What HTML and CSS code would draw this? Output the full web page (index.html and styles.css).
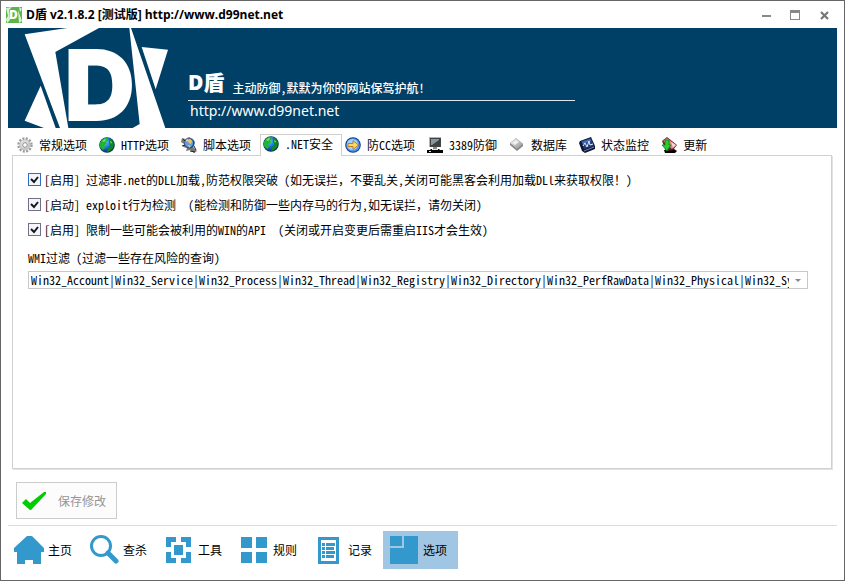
FILE: index.html
```html
<!DOCTYPE html>
<html lang="zh-CN">
<head>
  <meta charset="UTF-8" />
  <meta name="viewport" content="width=device-width, initial-scale=1.0"/>
  <title>D盾</title>
  <link rel="stylesheet" href="styles.css">
</head>
<body>
  <header class="titlebar">
    <svg class="app-icon" viewBox="0 0 16 16">
      <rect width="16" height="16" fill="#5cb54a"/>
      <path d="M0 1L6 0L3 3L4 13L1 16L0 12L2 9zM13 0L16 2L14 5zM12 3L16 14L13 16z" fill="#d9f2d2"/>
      <text class="mark" x="3" y="12" font-size="12" fill="#fff">D</text>
    </svg>
    <h1>D盾 v2.1.8.2 [测试版] http://www.d99net.net</h1>
    <div class="window-buttons">
      <button type="button" aria-label="最小化"><svg viewBox="0 0 11 11"><path d="M1 5h9v2H1z"/></svg></button>
      <button type="button" aria-label="最大化"><svg viewBox="0 0 11 11"><path d="M0 0h10v10H0zM1 3v6h8V3z" fill-rule="evenodd"/></svg></button>
      <button type="button" aria-label="关闭"><svg viewBox="0 0 11 11"><path d="M2 2l7 7M9 2l-7 7" stroke="#777" stroke-width="2.2"/></svg></button>
    </div>
  </header>

  <div class="banner">
    <svg class="banner-logo" viewBox="12 12 522 300">
      <g fill="#fff">
        <path d="M62 31L190 12H285L154 84L193 312H168z"/>
        <path d="M110 185L155 312H120L62 290z"/>
        <path d="M376 12H381L484 312H386L407 300z"/>
        <path d="M413 69L492 77L455 196z"/>
        <text class="logo-mark" x="180" y="291" font-size="296">D</text>
      </g>
    </svg>
    <div class="banner-text">
      <p class="slogan"><strong>D盾</strong> <span>主动防御,默默为你的网站保驾护航!</span></p>
      <p class="site">http://www.d99net.net</p>
    </div>
  </div>

  <!-- Gradients and the globe shared by the tab icons -->
  <svg class="defs" aria-hidden="true">
    <defs>
      <radialGradient id="sea" cx="35%" cy="30%" r="75%">
        <stop offset="0" stop-color="#7fd0ff"/>
        <stop offset="0.5" stop-color="#1a78d8"/>
        <stop offset="1" stop-color="#062a70"/>
      </radialGradient>
      <linearGradient id="silver" x1="0" y1="0" x2="1" y2="1">
        <stop offset="0" stop-color="#f4f4f4"/>
        <stop offset="1" stop-color="#8e8e8e"/>
      </linearGradient>
      <symbol id="globe" viewBox="0 0 16 16">
        <circle cx="8" cy="8" r="7.8" fill="#0a3a50"/>
        <circle cx="8" cy="8" r="7.2" fill="url(#sea)"/>
        <path d="M1 6L4 2L8 1L9 3L7 5L8 7L5 8L6 11L4 13L1 10z" fill="#1fb52c"/>
        <path d="M10 2L13 3L15 7L14 11L11 14L8 15L9 11L12 9L10 6z" fill="#0c8a1c"/>
        <path d="M3 4L6 2L7 3L5 5zM11 4L13 5L12 7z" fill="#7be86a"/>
      </symbol>
    </defs>
  </svg>

  <div class="tabs" role="tablist">
    <button class="tab" type="button" role="tab">
      <svg viewBox="0 0 16 16">
        <circle cx="8" cy="8" r="6.4" fill="none" stroke="#9b9b9b" stroke-width="2.6" stroke-dasharray="2 1.35"/>
        <circle cx="8" cy="8" r="5.6" fill="#c4c4c4"/>
        <circle cx="7.5" cy="7.3" r="4" fill="#dedede"/>
        <circle cx="8" cy="8" r="2.3" fill="#fff" stroke="#8f8f8f"/>
      </svg>常规选项
    </button>
    <button class="tab" type="button" role="tab">
      <svg viewBox="0 0 16 16"><use href="#globe"/></svg>HTTP选项
    </button>
    <button class="tab" type="button" role="tab">
      <svg viewBox="0 0 16 16">
        <path d="M1 1L4 2L8 0L12 2L14 5L12 10L16 14L13 16L9 13L5 14L6 11L2 10L3 7L0 5z" fill="#777"/>
        <path d="M2 2L4 4M1 9L4 8M13 9L15 13M9 14L14 15" stroke="#222"/>
        <circle cx="8.5" cy="6.5" r="5" fill="#174a94"/>
        <circle cx="8" cy="6" r="4" fill="#5f9fe0"/>
        <path d="M6 3L9 2L11 4L10 7L8 6zM7 8L10 9L8 11z" fill="#f2c368"/>
        <path d="M5 3L7 2L6 5z" fill="#d8edff"/>
      </svg>脚本选项
    </button>
    <button class="tab active" type="button" role="tab" aria-selected="true">
      <svg viewBox="0 0 16 16"><use href="#globe"/></svg>.NET安全
    </button>
    <button class="tab" type="button" role="tab">
      <svg viewBox="0 0 16 16">
        <circle cx="8" cy="8" r="7.8" fill="#123c8c"/>
        <circle cx="8" cy="8" r="6.8" fill="#4b94e8"/>
        <circle cx="7.5" cy="7.5" r="5.6" fill="#a5d2fa"/>
        <path d="M3 6.5H8V3.5L13.5 8L8 12.5V9.5H3z" fill="#ffd768" stroke="#b9731a" stroke-width="0.9"/>
      </svg>防CC选项
    </button>
    <button class="tab" type="button" role="tab">
      <svg viewBox="0 0 16 16">
        <path d="M2 0H14V10H2z" fill="#b4b4b4"/>
        <path d="M3 1H13V9H3z" fill="#3a4348"/>
        <path d="M4 2H12V3L5 8H4z" fill="#8b979c"/>
        <path d="M13 1h1v9H3V9h10z" fill="#444"/>
        <path d="M6 10H10V12H6z" fill="#888"/>
        <path d="M0 13H3L4 12H12L13 13H16V16H0z" fill="#050505"/>
        <path d="M5 12H11V13H5zM2 14H4V15H2z" fill="#ddd"/>
      </svg>3389防御
    </button>
    <button class="tab" type="button" role="tab">
      <svg viewBox="0 0 16 16">
        <path d="M1 6L7 1L14 7L14 9L8 14L1 8z" fill="#858585"/>
        <path d="M1 6L7 1L14 7L8 12z" fill="url(#silver)"/>
        <path d="M3 6L7 3L10 5L6 8z" fill="#fff" opacity="0.7"/>
      </svg>数据库
    </button>
    <button class="tab" type="button" role="tab">
      <svg viewBox="0 0 16 16">
        <path d="M1 4L12 0L16 9L16 12L6 16L3 14L0 6z" fill="#0d1733"/>
        <path d="M2 4L12 1L15 9L5 12z" fill="#24407c"/>
        <path d="M3 5L11 2L12 4L4 7z" fill="#4c70b4"/>
        <path d="M4 9L6 6L8 10L10 4L11 8L14 7" fill="none" stroke="#dce9ff"/>
        <path d="M5 14L15 10" stroke="#7387b0"/>
      </svg>状态监控
    </button>
    <button class="tab" type="button" role="tab">
      <svg viewBox="0 0 16 16">
        <path d="M3 13L13 12L16 14L14 16H4z" fill="#050505"/>
        <path d="M1 4L6 0L16 8L12 13L5 14z" fill="#66232a"/>
        <path d="M2 4L6 1L15 8L11 12z" fill="#e77b80"/>
        <path d="M10 5L15 8L12 11z" fill="#f6d5d2"/>
        <path d="M4 3H8V8H10L6 14L1 8H4z" fill="#1fd32b" stroke="#0a7415" stroke-width="0.7"/>
      </svg>更新
    </button>
  </div>

  <main class="panel">
    <label class="check">
      <input type="checkbox" class="focused" checked>
      <span>[启用] 过滤非.net的DLL加载,防范权限突破 (如无误拦<span class="full">，</span>不要乱关,关闭可能黑客会利用加载DLl来获取权限！)</span>
    </label>
    <label class="check">
      <input type="checkbox" checked>
      <span>[启动] exploit行为检测&nbsp; (能检测和防御一些内存马的行为,如无误拦<span class="full">，</span>请勿关闭)</span>
    </label>
    <label class="check">
      <input type="checkbox" checked>
      <span>[启用] 限制一些可能会被利用的WIN的API&nbsp; (关闭或开启变更后需重启IIS才会生效)</span>
    </label>
    <label class="field-label" for="wmi">WMI过滤 (过滤一些存在风险的查询)</label>
    <select class="combo" id="wmi">
      <option>Win32_Account|Win32_Service|Win32_Process|Win32_Thread|Win32_Registry|Win32_Directory|Win32_PerfRawData|Win32_Physical|Win32_System</option>
    </select>
  </main>

  <button class="save" type="button" disabled>
    <svg viewBox="0 0 24 18"><path d="M0 11L4 7L8 11L22 0H24V2L9 18H8z" fill="#0c0"/></svg>保存修改
  </button>

  <nav class="bottom-nav">
    <button type="button">
      <svg viewBox="0 0 30 30"><path d="M13 1h5l5 5l7 7v4h-3v12h-8v-4h-8v4H3V17H0v-4z"/></svg>主页
    </button>
    <button type="button">
      <svg viewBox="0 0 30 30">
        <circle cx="12" cy="11" r="9.5" fill="none" stroke="#39c" stroke-width="3"/>
        <path d="M19 18l8 8" stroke="#39c" stroke-width="5" stroke-linecap="round"/>
      </svg>查杀
    </button>
    <button type="button">
      <svg viewBox="0 0 30 30"><path d="M2 2h10v5H7v5H2zM17 2h10v10h-5V7h-5zM2 17h5v6h5v5H2zM22 17h5v11H17v-5h5zM10 10h9v10h-9z"/></svg>工具
    </button>
    <button type="button">
      <svg viewBox="0 0 30 30"><path d="M2 2h11v11H2zM17 2h11v11H17zM2 17h11v11H2zM17 17h11v11H17z"/></svg>规则
    </button>
    <button type="button">
      <svg viewBox="0 0 30 30">
        <path d="M4 2h21v27H4zM7 5v21h15V5z" fill-rule="evenodd"/>
        <path d="M8 8h3v3H8zM12 8h9v3h-9zM8 12h3v3H8zM12 12h8v3h-8zM8 16h3v3H8zM12 16h9v3h-9zM8 20h3v3H8zM12 20h8v3h-8z"/>
      </svg>记录
    </button>
    <button type="button" class="active">
      <svg viewBox="0 0 30 30"><path d="M1 1h12v10H1zM15 1h14v28H1V13h14z"/></svg>选项
    </button>
  </nav>
</body>
</html>
```
FILE: styles.css
```css
* {
  box-sizing: border-box;
}

body {
  display: flex;
  flex-direction: column;
  min-height: 100vh;
  margin: 0;
  border: 1px solid #666;
  background-color: #fff;
  color: #000;
  font-family: "Noto Sans CJK SC", sans-serif;
  font-size: 12px;
  line-height: 16px;
  font-feature-settings: "hwid";
}

button, select {
  font: inherit;
  font-feature-settings: inherit;
  color: inherit;
}

button {
  padding: 0;
  border: none;
  background: none;
  text-align: left;
  white-space: nowrap;
}

svg {
  display: block;
  flex: none;
}

.defs {
  position: absolute;
  width: 0;
  height: 0;
}

.mark {
  font-family: "Open Sans", sans-serif;
  font-weight: 800;
  font-feature-settings: normal;
}

.logo-mark {
  font-family: Inter, sans-serif;
  font-weight: 900;
  font-feature-settings: normal;
}

/* full-width punctuation */
.full {
  font-feature-settings: normal;
}

/* Title bar */
.titlebar {
  display: flex;
  align-items: center;
  height: 27px;
  padding: 1px 5px 0;
}

.app-icon {
  width: 16px;
  height: 16px;
}

.titlebar h1 {
  flex: 1;
  margin: 0 0 0 4px;
  font-family: "Open Sans", "Noto Sans CJK SC", sans-serif;
  font-size: 12px;
  font-weight: bold;
  font-feature-settings: normal;
}

.window-buttons {
  display: flex;
}

.window-buttons button {
  display: flex;
  align-items: center;
  justify-content: center;
  width: 29px;
  height: 26px;
}

.window-buttons svg {
  width: 11px;
  height: 11px;
  fill: #888;
}

/* Banner */
.banner {
  display: flex;
  height: 100px;
  margin: 0 7px;
  background-color: #004066;
  color: #fff;
}

.banner-logo {
  width: 174px;
  height: 100px;
}

.banner-text {
  width: 393px;
  padding: 41px 0 0 6px;
}

.banner-text p {
  margin: 0;
}

.slogan {
  display: flex;
  align-items: flex-end;
  gap: 8px;
  height: 32px;
  border-bottom: 1px solid #e0e8ee;
  font-weight: 500;
  line-height: 24px;
}

.slogan strong {
  font-family: "Open Sans", "Noto Sans CJK SC", sans-serif;
  font-size: 21px;
  font-weight: 800;
  font-feature-settings: normal;
  line-height: 36px;
}

.site {
  padding-left: 2px;
  font-family: "Noto Sans", sans-serif;
  font-size: 14px;
  font-feature-settings: normal;
  line-height: 20px;
}

/* Tabs */
.tabs {
  display: flex;
  padding: 6px 0 0 13px;
}

.tab {
  display: flex;
  gap: 6px;
  height: 22px;
  padding: 2px 8px 0 2px;
  margin-bottom: -1px;
  border: 1px solid transparent;
  border-bottom: none;
}

.tab svg {
  width: 16px;
  height: 16px;
}

.tab.active {
  padding-top: 1px;
  border-color: #d0d0d0;
  background-color: #fff;
  z-index: 1;
}

.panel {
  display: flex;
  flex: 1;
  flex-direction: column;
  margin: 0 12px 0 11px;
  padding: 11px 23px 12px 15px;
  border: 1px solid #d0d0d0;
  box-shadow: 1px 1px #e3e3e3;
}

.check {
  display: flex;
  align-items: center;
  gap: 3px;
  min-height: 25px;
}

.check input {
  appearance: none;
  flex: none;
  width: 13px;
  height: 13px;
  margin: 0;
  border: 1px solid #70708a;
  background: #f6f6f8 url("data:image/svg+xml,%3Csvg xmlns='http://www.w3.org/2000/svg' viewBox='0 0 11 11'%3E%3Cpath d='M2 5l3 3l4-5' fill='none' stroke='%23101828' stroke-width='2'/%3E%3C/svg%3E");
}

.check input:not(:checked) {
  background-image: none;
}

.check input.focused {
  border-color: #2a6fc9;
}

.field-label {
  margin: 8px 0 5px;
}

.combo {
  appearance: none;
  width: 100%;
  height: 18px;
  padding: 0 18px 0 2px;
  border: 1px solid #c8c8c8;
  border-radius: 0;
  background: #fff url("data:image/svg+xml,%3Csvg xmlns='http://www.w3.org/2000/svg' width='6' height='3'%3E%3Cpath d='M0 0h6L3 3z' fill='%23888'/%3E%3C/svg%3E") no-repeat right 6px center;
}

.save {
  display: flex;
  align-items: center;
  align-self: flex-start;
  gap: 12px;
  height: 37px;
  margin: 13px 15px 6px;
  padding: 0 10px 0 5px;
  border: 1px solid #ccc;
  background-color: #fcfcfc;
  color: #959595;
}

.save svg {
  width: 24px;
  height: 18px;
}

/* Bottom navigation */
.bottom-nav {
  display: flex;
  margin: 0 7px;
  padding: 5px 0 11px;
  border-top: 1px solid #ddd;
}

.bottom-nav button {
  display: flex;
  align-items: center;
  gap: 4px;
  height: 38px;
  padding: 0 11px 0 6px;
}

.bottom-nav .active {
  background-color: #a1c6e4;
}

.bottom-nav svg {
  width: 30px;
  height: 30px;
  fill: #39c;
}
```
